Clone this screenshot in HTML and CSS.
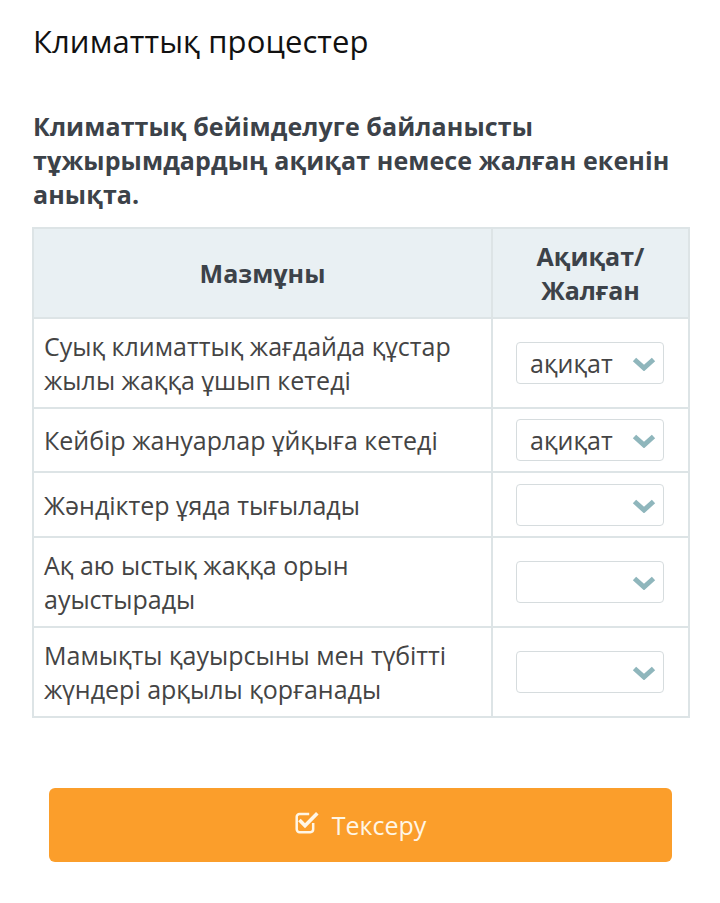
FILE: index.html
```html
<!DOCTYPE html>
<html>
<head>
<meta charset="utf-8">
<link rel="stylesheet" href="styles.css">
</head>
<body>
<div class="page">
  <h1 class="title">Климаттық процестер</h1>
  <p class="task">Климаттық бейімделуге байланысты тұжырымдардың ақиқат немесе жалған екенін анықта.</p>
  <table class="grid">
    <thead>
      <tr>
        <th class="c1">Мазмұны</th>
        <th class="c2">Ақиқат/<br>Жалған</th>
      </tr>
    </thead>
    <tbody>
      <tr>
        <td class="c1">Суық климаттық жағдайда құстар жылы жаққа ұшып кетеді</td>
        <td class="c2"><div class="sel"><span class="val">ақиқат</span><svg class="chev" viewBox="0 0 24 14" width="24" height="14"><path d="M2.5 2.5 L12 11 L21.5 2.5" fill="none" stroke="#8fb6bc" stroke-width="5"/></svg></div></td>
      </tr>
      <tr>
        <td class="c1">Кейбір жануарлар ұйқыға кетеді</td>
        <td class="c2"><div class="sel"><span class="val">ақиқат</span><svg class="chev" viewBox="0 0 24 14" width="24" height="14"><path d="M2.5 2.5 L12 11 L21.5 2.5" fill="none" stroke="#8fb6bc" stroke-width="5"/></svg></div></td>
      </tr>
      <tr>
        <td class="c1">Жәндіктер ұяда тығылады</td>
        <td class="c2"><div class="sel"><span class="val"></span><svg class="chev" viewBox="0 0 24 14" width="24" height="14"><path d="M2.5 2.5 L12 11 L21.5 2.5" fill="none" stroke="#8fb6bc" stroke-width="5"/></svg></div></td>
      </tr>
      <tr>
        <td class="c1">Ақ аю ыстық жаққа орын ауыстырады</td>
        <td class="c2"><div class="sel"><span class="val"></span><svg class="chev" viewBox="0 0 24 14" width="24" height="14"><path d="M2.5 2.5 L12 11 L21.5 2.5" fill="none" stroke="#8fb6bc" stroke-width="5"/></svg></div></td>
      </tr>
      <tr>
        <td class="c1">Мамықты қауырсыны мен түбітті жүндері арқылы қорғанады</td>
        <td class="c2"><div class="sel"><span class="val"></span><svg class="chev" viewBox="0 0 24 14" width="24" height="14"><path d="M2.5 2.5 L12 11 L21.5 2.5" fill="none" stroke="#8fb6bc" stroke-width="5"/></svg></div></td>
      </tr>
    </tbody>
  </table>
  <div class="actions">
    <button class="check">
      <svg class="icon" viewBox="0 0 22 22" width="25" height="25"><path d="M16 11.5 V17 a2.5 2.5 0 0 1 -2.5 2.5 H4 a2.5 2.5 0 0 1 -2.5 -2.5 V6 a2.5 2.5 0 0 1 2.5 -2.5 H12.5" fill="none" stroke="#fff6e6" stroke-width="2.2"/><path d="M5 10 L8.8 13.8 L18.5 4" fill="none" stroke="#fff6e6" stroke-width="3.2" stroke-linecap="square"/></svg>
      <span>Тексеру</span>
    </button>
  </div>
</div>
</body>
</html>
```

FILE: styles.css
```css
* { box-sizing: border-box; }
html, body { margin: 0; padding: 0; background: #fff; }
body { font-family: "Open Sans", "Noto Sans", sans-serif; }
.page { padding: 0 30px 0 32px; }
.title {
  margin: 0;
  padding-top: 20px;
  padding-left: 1px;
  font-size: 31px;
  font-weight: 400;
  line-height: 42px;
  color: #111;
  letter-spacing: 0.1px;
}
.task {
  margin: 47px 0 0 1px;
  font-size: 25px;
  font-weight: 700;
  line-height: 34px;
  color: #3c4249;
  letter-spacing: 0.1px;
}
.grid {
  margin-top: 16px;
  width: 658px;
  border-collapse: collapse;
  border: 2px solid #dde4e6;
}
.grid th, .grid td {
  border: 2px solid #dde4e6;
  vertical-align: middle;
}
.grid th {
  background: #e9f0f3;
  font-size: 25px;
  font-weight: 700;
  line-height: 34px;
  color: #3c4249;
  padding: 10px 8px;
  height: 90px;
}
.grid th.c1 { width: 460px; }
.grid td {
  font-size: 25px;
  line-height: 34px;
  color: #444;
  padding: 10px;
  height: 64px;
}
.grid td.c2 { padding: 10px 24px 10px 23px; }
.grid tbody tr:nth-child(3) td { height: 65px; }
.sel {
  width: 148px;
  height: 42px;
  border: 1px solid #d6dcde;
  border-radius: 4px;
  display: flex;
  align-items: center;
  justify-content: space-between;
  padding: 0 7px 0 13px;
  background: #fff;
}
.val { font-size: 25px; color: #444; line-height: 34px; }
.chev { flex: none; margin-top: 2px; }
.actions { padding: 70px 18px 0 17px; }
.check {
  width: 623px;
  height: 74px;
  border: none;
  border-radius: 6px;
  background: #fb9e2b;
  color: #fff6e6;
  font-family: "Open Sans", "Noto Sans", sans-serif;
  font-size: 25px;
  display: flex;
  align-items: center;
  justify-content: center;
  gap: 12px;
  padding: 0;
}
.icon { margin-top: -6px; }
```
